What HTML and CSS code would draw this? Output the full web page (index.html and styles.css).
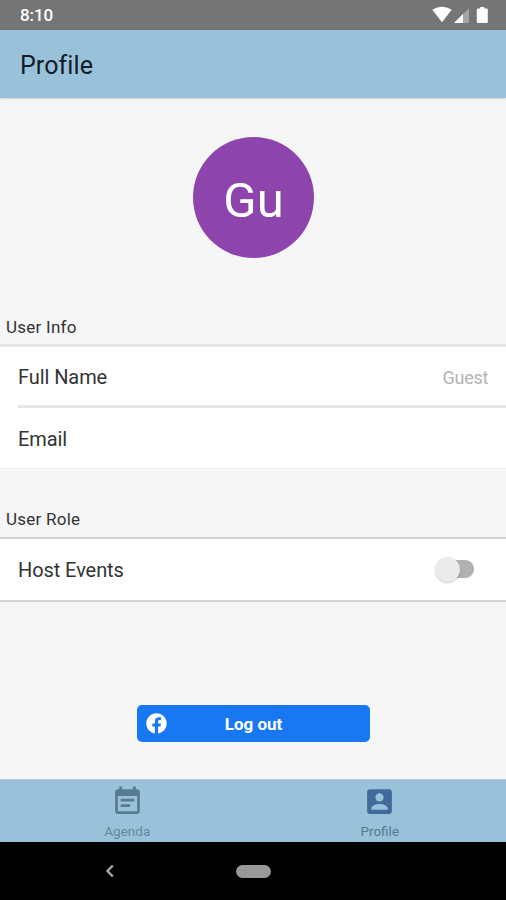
FILE: index.html
```html
<!DOCTYPE html>
<html lang="en">
<head>
<meta charset="utf-8">
<title>Profile</title>
<link rel="stylesheet" href="styles.css">
</head>
<body>
<div class="status">
  <span class="clock">8:10</span>
  <svg class="status-icons" width="60" height="30" viewBox="0 0 60 30" fill="#fff">
    <path d="M1.300 9.800Q11 3.600 20.700 9.800L11 22.200Z"/>
    <path d="M38 8.200V23H23Z" opacity=".35"/>
    <path d="M32 14V23H23Z"/>
    <path d="M49.300 7h4v1.500h2.200q1.300 0 1.300 1.300v11.900q0 1.300-1.300 1.300h-8.400q-1.300 0-1.300-1.300V9.800q0-1.300 1.300-1.300H49.300Z"/>
  </svg>
</div>
<header class="header"><h1>Profile</h1></header>
<main class="content">
  <div class="avatar"><span>Gu</span></div>
  <h2 class="section-title">User Info</h2>
  <section class="list info">
    <div class="row name"><span>Full Name</span><span class="value">Guest</span></div>
    <div class="row email"><span>Email</span></div>
  </section>
  <h2 class="section-title role-title">User Role</h2>
  <section class="list role">
    <div class="row host"><span>Host Events</span><span class="switch"><span class="thumb"></span></span></div>
  </section>
  <button class="logout">
    <svg width="21" height="21" viewBox="0 0 512 512" fill="#fff"><path d="M504 256C504 119 393 8 256 8S8 119 8 256c0 123.780 90.690 226.380 209.250 245V327.690h-63V256h63v-54.640c0-62.150 37-96.480 93.670-96.480 27.140 0 55.520 4.840 55.520 4.840v61h-31.280c-30.800 0-40.410 19.120-40.410 38.730V256h68.780l-11 71.690h-57.780V501C413.310 482.380 504 379.780 504 256z"/></svg>
    <span>Log out</span>
  </button>
</main>
<nav class="tabs">
  <a class="tab agenda">
    <svg width="33" height="33" viewBox="0 0 24 24" fill="currentColor"><path d="M17 10H7v2h10v-2zm2-7h-1V1h-2v2H8V1H6v2H5c-1.110 0-2 .9-2 2v14c0 1.100.89 2 2 2h14c1.100 0 2-.9 2-2V5c0-1.100-.9-2-2-2zm0 16H5V8h14v11zm-5-5H7v2h7v-2z"/></svg>
    <span>Agenda</span>
  </a>
  <a class="tab profile">
    <svg width="33" height="33" viewBox="0 0 24 24" fill="currentColor"><path d="M3 5v14c0 1.100.89 2 2 2h14c1.100 0 2-.9 2-2V5c0-1.100-.9-2-2-2H5c-1.110 0-2 .9-2 2zm12 4c0 1.660-1.340 3-3 3s-3-1.340-3-3 1.340-3 3-3 3 1.340 3 3zm-9 8c0-2 4-3.100 6-3.100s6 1.100 6 3.100v1H6v-1z"/></svg>
    <span>Profile</span>
  </a>
</nav>
<div class="system">
  <svg width="10" height="14" viewBox="0 0 10 14" fill="none" stroke="#a8a8a8" stroke-width="2.400"><path d="M7.800 1.500L2.500 7 7.800 12.500"/></svg>
  <span class="home"></span>
</div>
</body>
</html>
```

FILE: styles.css
```css
* { box-sizing: border-box; }
body {
  margin: 0;
  height: 900px;
  display: flex;
  flex-direction: column;
  overflow: hidden;
  background: #f6f6f6;
  font-family: Roboto, sans-serif;
  color: #333;
}
h1, h2 { margin: 0; font-weight: 400; }
svg { display: block; flex: none; }
.status {
  height: 30px;
  flex: none;
  display: flex;
  align-items: center;
  justify-content: space-between;
  padding: 0 16px 0 20px;
  background: #757575;
}
.clock { color: #fff; font-size: 17px; font-weight: 500; letter-spacing: -.1px; }
.status-icons { margin-right: -1px; }
.header {
  height: 68px;
  flex: none;
  display: flex;
  align-items: center;
  padding: 3px 20px 0;
  background: #99c1da;
  box-shadow: 0 1px 2px rgba(0, 0, 0, .14);
}
.header h1 { font-size: 25px; letter-spacing: .1px; color: #101c28; }
.content {
  height: 681px;
  flex: none;
  display: flex;
  flex-direction: column;
}
.avatar {
  width: 121px;
  height: 121px;
  margin: 39px 0 0 193px;
  padding-top: 5px;
  border-radius: 50%;
  background: #8e44ad;
  color: #fff;
  font-size: 49px;
  display: flex;
  align-items: center;
  justify-content: center;
}
.section-title {
  height: 20px;
  margin-top: 59px;
  padding-left: 6px;
  font-size: 17px;
  line-height: 20px;
  letter-spacing: .25px;
}
.list { background: #fff; }
.info {
  height: 125px;
  margin-top: 7px;
  border-top: 3px solid #e5e5e5;
  border-bottom: 1px solid #ececec;
}
.row {
  display: flex;
  align-items: center;
  justify-content: space-between;
  margin-left: 18px;
  padding-right: 18px;
  font-size: 20px;
  letter-spacing: -.08px;
}
.name { height: 61px; border-bottom: 3px solid #e5e5e5; padding-top: 2px; }
.email { height: 60px; padding-top: 2px; }
.value { font-size: 18px; letter-spacing: -.3px; color: #b3b3b3; }
.role-title { margin-top: 40px; }
.role { height: 65px; margin-top: 8px; border-top: 2px solid #d4d4d4; border-bottom: 2px solid #d4d4d4; }
.host { height: 61px; padding: 1px 32px 0 0; }
.switch {
  width: 39px;
  height: 26px;
  margin-bottom: 2px;
  display: flex;
  align-items: center;
  background: linear-gradient(#b1b1b1, #b1b1b1) 15px 4px / 15px 18px no-repeat,
    radial-gradient(circle at 30px 13px, #b1b1b1 8.5px, transparent 9.5px);
}
.thumb {
  width: 25px;
  height: 25px;
  border-radius: 50%;
  background: #ebebeb;
  box-shadow: 0 1px 2px rgba(0, 0, 0, .2);
}
.logout {
  width: 233px;
  height: 37px;
  margin: 103px 0 0 137px;
  padding: 0 9px;
  display: flex;
  align-items: center;
  border: 0;
  border-radius: 5px;
  background: #1877f2;
  color: #fff;
  font: 700 17px Roboto, sans-serif;
}
.logout span { flex: 1; padding: 1px 21px 0 0; text-align: center; }
.tabs {
  height: 63px;
  flex: none;
  display: flex;
  padding-left: 1px;
  background: #99c1da;
  border-top: 1px solid #b3cddd;
}
.tab {
  flex: 1;
  display: flex;
  flex-direction: column;
  align-items: center;
  padding-top: 5px;
  font-size: 13.5px;
  line-height: 16px;
}
.tab span { margin-top: 5px; color: #58788f; }
.agenda { color: #587b93; }
.profile { color: #416a9b; }
.agenda span { color: #6488a0; }
.system {
  height: 58px;
  flex: none;
  display: flex;
  align-items: center;
  gap: 121px;
  padding-left: 105px;
  background: #000;
}
.home { width: 35px; height: 13px; border-radius: 7px; background: #999; }
```
